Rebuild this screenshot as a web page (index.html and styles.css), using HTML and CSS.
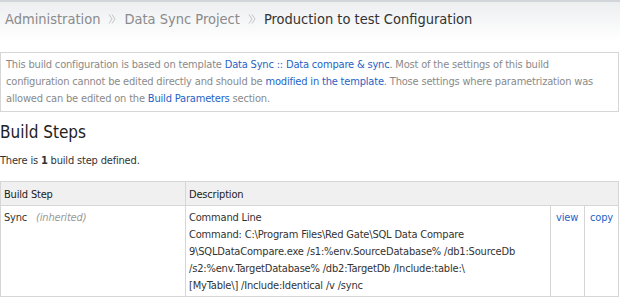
FILE: index.html
```html
<!DOCTYPE html>
<html lang="en">
<head>
  <link rel="stylesheet" href="styles.css">
</head>
<body>
  <div class="crumbs">
    <a class="crumb" href="#">Administration</a>
    <svg class="sep" width="8" height="12" viewBox="0 0 8 12"><path d="M1 1.5L4 6L1 10.5M4 1.5L7 6L4 10.5" fill="none" stroke="#c4c4c4" stroke-width="1"/></svg>
    <a class="crumb" href="#">Data Sync Project</a>
    <svg class="sep" width="8" height="12" viewBox="0 0 8 12"><path d="M1 1.5L4 6L1 10.5M4 1.5L7 6L4 10.5" fill="none" stroke="#c4c4c4" stroke-width="1"/></svg>
    <span class="crumb current">Production to test Configuration</span>
  </div>

  <div class="note">
    This build configuration is based on template <a href="#">Data Sync :: Data compare &amp; sync</a>. Most of the settings of this build
    configuration cannot be edited directly and should be <a href="#">modified in the template</a>. Those settings where parametrization was
    allowed can be edited on the <a href="#">Build Parameters</a> section.
  </div>

  <h2 class="title">Build Steps</h2>
  <p class="count">There is <b>1</b> build step defined.</p>

  <table class="steps">
    <colgroup>
      <col class="col-name">
      <col class="col-desc">
      <col class="col-view">
      <col class="col-copy">
    </colgroup>
    <tr>
      <th>Build Step</th>
      <th colspan="3">Description</th>
    </tr>
    <tr>
      <td>Sync <span class="inh">(inherited)</span></td>
      <td>Command Line<br>Command: C:\Program Files\Red Gate\SQL Data Compare 9\SQLDataCompare.exe /s1:%env.SourceDatabase% /db1:SourceDb /s2:%env.TargetDatabase% /db2:TargetDb /Include:table:\<br>[MyTable\] /Include:Identical /v /sync</td>
      <td class="act"><a href="#">view</a></td>
      <td class="act"><a href="#">copy</a></td>
    </tr>
  </table>
</body>
</html>
```

FILE: styles.css
```css
body {
  margin: 0;
  font-family: "DejaVu Sans Condensed", "DejaVu Sans", sans-serif;
  font-size: 11px;
  letter-spacing: -0.18px;
  color: #333;
  background: #fff;
}
a {
  color: #1f63c6;
  text-decoration: none;
}
.crumbs {
  display: flex;
  align-items: center;
  gap: 6px;
  height: 34px;
  padding: 0 5px 4px;
  border-top: 2px solid #d2d6da;
  background: linear-gradient(#eceef0, #fff);
  font-size: 14.5px;
  letter-spacing: 0;
}
.crumb {
  color: #8a8a8a;
}
.crumb.current {
  color: #333;
}
.sep {
  margin: 0 2px;
}
.note {
  margin: 12px 1px 0 0;
  padding: 3px 5px 4px;
  border: 1px solid #d6d6d6;
  color: #8a8a8a;
  line-height: 17px;
}
.title {
  margin: 10px 0 0;
  font-size: 17px;
  font-weight: normal;
  letter-spacing: 0;
  color: #222;
}
.count {
  margin: 12px 0 0;
}
.steps {
  margin-top: 14px;
  width: 619px;
  table-layout: fixed;
  border-collapse: collapse;
  border: 1px solid #d6d6d6;
}
.col-name {
  width: 185px;
}
.col-desc {
  width: 365px;
}
.col-view {
  width: 34px;
}
.steps th,
.steps td {
  border: 1px solid #d6d6d6;
  padding: 3px 3px 2px;
  text-align: left;
  vertical-align: top;
  line-height: 17px;
}
.steps th {
  padding: 4px 3px 2px;
  font-weight: normal;
  background: #f0f0f0;
  color: #222;
}
.steps .act {
  padding: 3px 5px 2px;
}
.inh {
  color: #999;
  font-style: italic;
  margin-left: 6px;
}
```
